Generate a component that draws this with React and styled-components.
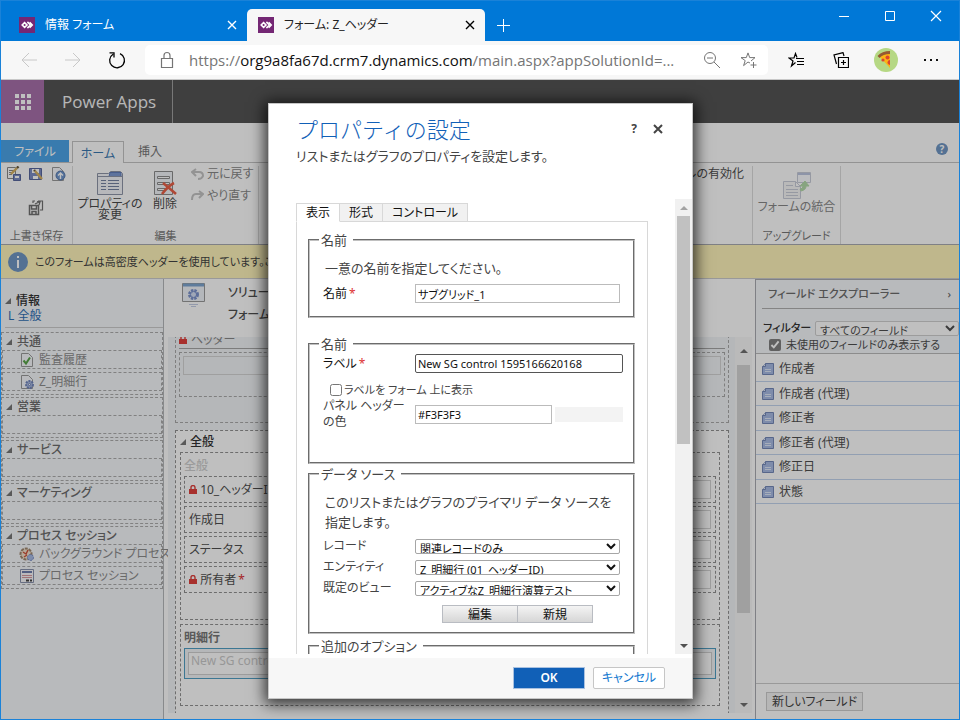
import React from 'react'
import styled, { createGlobalStyle, css } from 'styled-components'

const GlobalStyle = createGlobalStyle`
  * {
    box-sizing: border-box;
  }

  body {
    margin: 0;
    font-family: 'Noto Sans', 'Noto Sans CJK JP', sans-serif;
    font-feature-settings: 'palt';
    font-size: 12px;
    line-height: 16px;
  }

  button, input, select {
    font: inherit;
    font-feature-settings: inherit;
    color: inherit;
    margin: 0;
  }
`

const Window = styled.div`
  display: flex;
  flex-direction: column;
  height: 100vh;
  border: 1px solid #1a82d8;
  border-top: 0;
  overflow: hidden;
`

const IconButton = styled.button`
  align-items: center;
  background: none;
  border: 0;
  color: ${(p) => p.$color || '#000'};
  display: flex;
  flex: none;
  height: ${(p) => p.$height || 16}px;
  justify-content: center;
  padding: 0;
  width: ${(p) => p.$width || 16}px;
`

/* browser chrome */

const TitleBar = styled.div`
  align-items: flex-end;
  background: #0078d7;
  border-top: 1px solid #1a82d8;
  display: flex;
  height: 41px;
`

const BrowserTab = styled.div`
  align-items: center;
  background: ${(p) => (p.$active ? '#f7f7f7' : 'transparent')};
  border-radius: 5px 5px 0 0;
  color: ${(p) => (p.$active ? '#222' : '#fff')};
  display: flex;
  gap: 10px;
  height: 32px;
  padding: 0 7px 0 ${(p) => (p.$active ? 11 : 18)}px;
  width: ${(p) => (p.$active ? 238 : 246)}px;
`

const TabTitle = styled.span`
  flex: 1;
  white-space: nowrap;
`

const WindowControls = styled.div`
  align-self: flex-start;
  display: flex;
  margin-left: auto;
`

const Toolbar = styled.div`
  align-items: center;
  background: #f7f7f7;
  border-bottom: 1px solid #c8c8c8;
  display: flex;
  flex: none;
  height: 39px;
  padding: 0 6px;
`

const AddressBar = styled.div`
  align-items: center;
  background: #fff;
  border-radius: 5px;
  color: #757575;
  display: flex;
  flex: 1;
  height: 30px;
  margin: 0 5px 0 6px;
  min-width: 0;
  padding: 0 2px 0 12px;
`

const Url = styled.span`
  flex: 1;
  font-family: 'Open Sans', sans-serif;
  font-size: 15px;
  line-height: 20px;
  margin-left: 12px;
  overflow: hidden;
  white-space: nowrap;

  b {
    color: #111;
    font-weight: 400;
  }
`

/* page */

const Page = styled.div`
  background: #fff;
  color: #4f4f4f;
  display: flex;
  flex: 1;
  flex-direction: column;
  min-height: 0;
  position: relative;
`

const AppHeader = styled.header`
  background: #555;
  display: flex;
  flex: none;
  height: 43px;
`

const AppName = styled.div`
  border-right: 1px solid #a0a0a0;
  color: #f4f4f4;
  font-family: 'Open Sans', sans-serif;
  font-size: 17px;
  line-height: 43px;
  padding: 0 18px;
  white-space: nowrap;
  width: 129px;
`

const RibbonTabs = styled.nav`
  align-items: flex-end;
  border-bottom: 1px solid #c4c4c4;
  display: flex;
  flex: none;
  height: 40px;
  padding-right: 11px;
`

const RibbonTab = styled.a`
  color: ${(p) => (p.$kind === 'file' ? '#fff' : p.$kind === 'active' ? '#3a78b0' : '#777')};
  height: 22px;
  line-height: 24px;
  text-align: center;
  text-decoration: none;
  width: ${(p) => (p.$kind === 'file' ? 68 : 52)}px;
  ${(p) =>
    p.$kind === 'file' &&
    css`
      background: #4da5e8;
      margin-right: 3px;
    `}
  ${(p) =>
    p.$kind === 'active' &&
    css`
      background: #fff;
      border: 1px solid #c4c4c4;
      border-bottom: 0;
      margin-bottom: -1px;
    `}
`

const HelpLink = styled.button`
  align-self: center;
  background: #7097c4;
  border: 0;
  border-radius: 50%;
  color: #fff;
  font-size: 10px;
  font-weight: 700;
  height: 12px;
  line-height: 12px;
  margin: 12px 0 0 auto;
  padding: 0;
  width: 12px;
`

const Ribbon = styled.div`
  border-bottom: 1px solid #aaabb2;
  display: flex;
  flex: none;
  height: 82px;
`

const RibbonGroup = styled.section`
  border-right: 1px solid #dcdcdc;
  display: flex;
  flex: none;
  flex-direction: column;
  margin-top: 3px;
  width: ${(p) => p.$width}px;
`

const RibbonItems = styled.div`
  display: flex;
  flex: 1;
  flex-wrap: wrap;
  justify-content: ${(p) => p.$justify || 'flex-start'};
  padding: 0 ${(p) => p.$pad || 6}px;
`

const RibbonCaption = styled.div`
  color: #777;
  font-size: 11px;
  line-height: 16px;
  text-align: center;
`

const SmallIcons = styled.div`
  display: flex;
  flex-wrap: wrap;
  gap: 6px;
  justify-content: center;
  width: 60px;
`

const BigButton = styled.button`
  align-items: center;
  align-self: flex-start;
  background: none;
  border: 0;
  color: ${(p) => (p.$muted ? '#888' : '#4a4a4a')};
  display: flex;
  flex-direction: column;
  font-size: 12px;
  gap: 2px;
  line-height: 11px;
  padding: 5px 0 0;
  white-space: nowrap;
  width: ${(p) => p.$width}px;
`

const StackedButtons = styled.div`
  display: flex;
  flex-direction: column;
  gap: 6px;
  margin-left: 4px;

  button {
    align-items: center;
    background: none;
    border: 0;
    color: #888;
    display: flex;
    gap: 3px;
    padding: 0;
  }
`

const Notice = styled.div`
  align-items: center;
  background: #fff5bb;
  border-bottom: 1px solid #ccc;
  color: #444;
  display: flex;
  flex: none;
  font-size: 11px;
  gap: 7px;
  height: 34px;
  padding-left: 7px;
  white-space: nowrap;
`

const Main = styled.main`
  display: flex;
  flex: 1;
  min-height: 0;
`

/* left navigation */

const SideNav = styled.nav`
  background: #f6f8fb;
  border-right: 1px solid #b6b8bb;
  display: flex;
  flex: none;
  flex-direction: column;
  gap: 2px;
  width: 163px;
`

const NavTop = styled.div`
  border-bottom: 1px solid #ccc;
  height: 49px;
  margin: 0 0 2px 4px;
  padding-top: 14px;

  a {
    color: #2f6fb5;
    display: block;
    line-height: 14px;
    padding-left: 3px;
    text-decoration: none;
  }
`

const NavTitle = styled.div`
  align-items: center;
  color: ${(p) => (p.$strong ? '#333' : '#6c6c6c')};
  display: flex;
  font-weight: 500;
  gap: 5px;
  line-height: ${(p) => (p.$strong ? 16 : 17)}px;
`

const NavSection = styled.section`
  border: 1px dashed #acacac;
  padding-bottom: 3px;

  ${NavTitle} {
    padding-left: 4px;
  }
`

const NavItem = styled.div`
  align-items: center;
  border: 1px dashed #acacac;
  color: #8d8d8d;
  display: flex;
  gap: 4px;
  height: 19px;
  padding-left: 16px;
  white-space: nowrap;

  & + & {
    margin-top: 3px;
  }
`

/* form canvas */

const Canvas = styled.div`
  display: flex;
  flex: 1;
  flex-direction: column;
  min-width: 0;
  padding: 0 3px 6px 4px;
`

const CanvasHead = styled.div`
  display: flex;
  flex: none;
  gap: 22px;
  height: 58px;
  padding: 3px 0 0 10px;

  p {
    font-weight: 500;
    line-height: 22px;
    margin: 0;
    white-space: nowrap;
  }
`

const CanvasScroll = styled.div`
  background: #f2f4f7;
  display: flex;
  flex: 1;
  min-height: 0;
`

const FormArea = styled.div`
  flex: 1;
  min-width: 0;
  overflow: hidden;
  padding: 0 6px 0 7px;
`

const HeaderBox = styled.section`
  border: 1px dashed #aaa;
  height: 93px;
  margin: -7px 0 7px;
  padding: 0 3px;
`

const HeaderTitle = styled.div`
  align-items: center;
  border-bottom: 1px solid #a6a6a6;
  color: #888;
  display: flex;
  gap: 4px;
  height: 18px;
  margin-bottom: 3px;
`

const HeaderCell = styled.div`
  border: 1px dashed #aaa;
  height: 45px;
  padding: 3px;
`

const FakeInput = styled.div`
  border: 1px solid #d4d4d4;
  background: ${(p) => (p.$plain ? 'transparent' : '#fff')};
  height: ${(p) => p.$height || 19}px;
  ${(p) => p.$width && `width: ${p.$width}px;`}
`

const BodyBox = styled.section`
  background: #fff;
  border: 1px dashed #929292;
  height: 400px;
  padding: 0 8px 0 4px;
`

const BodyTitle = styled.h2`
  align-items: center;
  color: #333;
  display: flex;
  font-size: 12px;
  font-weight: 500;
  gap: 4px;
  height: 21px;
  margin: 0;
`

const FormSection = styled.div`
  border: 1px dashed #929292;
  height: ${(p) => p.$height}px;
  margin-bottom: 4px;
  padding: 0 3px;
`

const SectionTitle = styled.h3`
  color: ${(p) => (p.$muted ? '#cfcfcf' : '#777')};
  font-size: 12px;
  font-weight: ${(p) => (p.$muted ? 500 : 700)};
  height: 23px;
  line-height: 26px;
  margin: 0;
`

const Cell = styled.div`
  align-items: center;
  border: 1px dashed #929292;
  display: flex;
  height: 27px;
  margin-bottom: 3px;
  padding: 0 4px;
  white-space: nowrap;

  ${FakeInput} {
    margin-left: auto;
  }
`

const Required = styled.span`
  color: #d33;
  margin-left: 2px;
`

const GridCell = styled.div`
  border: 1px solid #519fc4;
  background: #f2f4f7;
  padding: 3px;
`

const GridName = styled.div`
  background: #fff;
  border: 1px solid #d0d0d0;
  color: #cacaca;
  height: 23px;
  line-height: 15px;
  padding-left: 2px;
`

const ScrollBar = styled.div`
  align-items: center;
  background: ${(p) => p.$track};
  display: flex;
  flex: none;
  flex-direction: column;
  justify-content: space-between;
  width: 17px;
`

const Thumb = styled.div`
  background: ${(p) => p.$color || '#c1c1c1'};
  height: ${(p) => p.$height}%;
  margin-bottom: auto;
  width: 13px;
`

const ScrollArrow = styled.span`
  align-items: center;
  display: flex;
  flex: none;
  height: ${(p) => p.$height || 17}px;
`

/* field explorer */

const Explorer = styled.aside`
  background: #fff;
  border-left: 1px solid #aaabb2;
  border-top: 1px solid #aaabb2;
  display: flex;
  flex: none;
  flex-direction: column;
  width: 204px;
`

const ExplorerHead = styled.div`
  background: #f6f8fb;
  border-bottom: 1px solid #bbb;
  padding-left: 6px;

  h2 {
    border-bottom: 1px solid #b0b0b0;
    color: #6c6c6c;
    display: flex;
    font-size: 11px;
    font-weight: 500;
    justify-content: space-between;
    line-height: 28px;
    margin: 0 0 11px;
    padding: 0 8px 0 6px;
  }
`

const FilterRow = styled.div`
  align-items: center;
  display: flex;
  font-size: 11px;
  gap: 8px;
  padding-left: 1px;

  label {
    color: #333;
    font-weight: 500;
    width: 44px;
    white-space: nowrap;
  }
`

const CheckRow = styled.label`
  align-items: center;
  display: flex;
  font-size: 11px;
  gap: ${(p) => p.$gap}px;
  height: 17px;
  padding-left: 7px;
  white-space: nowrap;

  input {
    accent-color: #808080;
    height: 12px;
    width: 12px;
  }
`

const FieldList = styled.ul`
  border-bottom: 1px solid #ccc;
  flex: 1;
  list-style: none;
  margin: 0;
  padding: 3px 0 0;

  li {
    align-items: center;
    border-bottom: 1px solid #c3d5ee;
    display: flex;
    gap: 5px;
    height: 24px;
    padding-left: 6px;
  }

  li:nth-child(odd) {
    height: 25px;
  }
`

const NewFieldButton = styled.button`
  align-self: flex-start;
  background: #f3f3f3;
  border: 1px solid #ccc;
  color: #444;
  height: 19px;
  line-height: 16px;
  margin: 8px 10px;
  padding: 0 5px;
`

/* dialog */

const Overlay = styled.div`
  background: rgba(0, 0, 0, 0.25);
  display: flex;
  inset: 0;
  justify-content: center;
  padding: 23px 0 20px 1px;
  position: absolute;
`

const Dialog = styled.div`
  background: #fff;
  border: 1px solid #c6c6c6;
  box-shadow: 0 2px 14px 3px rgba(0, 0, 0, 0.75);
  color: #444;
  display: flex;
  flex-direction: column;
  width: 425px;
`

const DialogHead = styled.header`
  display: flex;
  flex: none;
  height: 95px;
  justify-content: space-between;
  padding: 10px 26px 0 27px;

  h1 {
    color: #1160b7;
    font-feature-settings: normal;
    font-size: 22px;
    font-weight: 300;
    line-height: 30px;
    margin: 0;
  }

  p {
    font-size: 13px;
    line-height: 20px;
    margin: 2px 0 0;
    white-space: nowrap;
  }
`

const DialogTools = styled.div`
  display: flex;
  gap: 8px;
  padding-top: 7px;
`

const DialogBody = styled.div`
  display: flex;
  flex: 1;
  min-height: 0;
  padding-left: 27px;
`

const DialogScroll = styled.div`
  flex: 1;
  overflow: hidden;
  padding: 4px 27px 0 0;
`

const TabList = styled.div`
  display: flex;
  margin-bottom: -1px;
`

const DialogTab = styled.button`
  background: ${(p) => (p.$active ? '#fff' : '#f1f1f1')};
  border: 1px solid #d8d8d8;
  border-bottom-color: ${(p) => (p.$active ? '#fff' : '#d8d8d8')};
  color: #111;
  height: 19px;
  line-height: 16px;
  padding: 0 9px;

  & + & {
    border-left: 0;
  }
`

const TabPanel = styled.div`
  border: 1px solid #d8d8d8;
  height: 640px;
  padding: 8px 12px 0 11px;
`

const Fieldset = styled.fieldset`
  border: 2px groove #c0c0c0;
  height: ${(p) => p.$height}px;
  margin: 0 0 ${(p) => p.$after}px;
  min-width: 0;
  padding: 0 10px 0 13px;

  legend {
    font-size: 13px;
    line-height: 20px;
    margin-left: -4px;
    padding: 0 6px 0 2px;
  }
`

const Hint = styled.p`
  font-size: 13px;
  line-height: 20px;
  margin: 8px 0 6px 2px;
`

const Row = styled.div`
  align-items: center;
  display: flex;
  margin-bottom: ${(p) => p.$after || 0}px;

  label {
    color: ${(p) => (p.$dark ? '#111' : '#444')};
    flex: none;
    width: 92px;
  }
`

const TextInput = styled.input`
  background: #fff;
  border: 1px solid ${(p) => (p.$focused ? '#555' : '#bbb')};
  border-radius: ${(p) => (p.$focused ? 2 : 0)}px;
  color: #111;
  font-size: 11px;
  height: 19px;
  padding: 0 2px;
  width: ${(p) => p.$width}px;
`

const Select = styled.select`
  background: #fff;
  border: 1px solid ${(p) => (p.$light ? '#d0d0d0' : '#a6a6a6')};
  border-radius: 2px;
  color: ${(p) => (p.$light ? '#4f4f4f' : '#111')};
  flex: ${(p) => (p.$width ? 'none' : 1)};
  font-size: 11px;
  height: 15px;
  line-height: 13px;
  min-width: 0;
  padding: 0;
  ${(p) => p.$width && `width: ${p.$width}px;`}
`

const Swatch = styled.span`
  background: #f3f3f3;
  height: 15px;
  margin-left: 3px;
  width: 69px;
`

const ButtonPair = styled.div`
  display: flex;
  margin: 9px 0 0 119px;

  button {
    background: linear-gradient(#f4f4f4, #d6d6d6);
    border: 1px solid #b9bcc2;
    color: #111;
    height: 18px;
    line-height: 15px;
    padding: 0;
    width: 76px;
  }

  button + button {
    margin-left: -1px;
  }
`

const DialogFooter = styled.footer`
  background: #f7f7f7;
  display: flex;
  flex: none;
  gap: 8px;
  height: 40px;
  justify-content: flex-end;
  margin-top: 4px;
  padding: 9px 27px 0;
`

const FooterButton = styled.button`
  background: ${(p) => (p.$primary ? '#1160b7' : '#fff')};
  border: 1px solid ${(p) => (p.$primary ? '#a9c1e0' : '#c6c6c6')};
  border-radius: ${(p) => (p.$primary ? 0 : 2)}px;
  color: ${(p) => (p.$primary ? '#fff' : '#1177cf')};
  font-weight: ${(p) => (p.$primary ? 600 : 400)};
  height: 22px;
  line-height: 18px;
  padding: 0;
  width: 72px;
`

/* icons */

const Svg = ({ size = 16, w, h, children, ...rest }) => (
  <svg
    width={w || size}
    height={h || size}
    viewBox={`0 0 ${w || size} ${h || size}`}
    fill="none"
    stroke="currentColor"
    aria-hidden="true"
    style={{ flex: 'none' }}
    {...rest}
  >
    {children}
  </svg>
)

const Favicon = () => (
  <Svg stroke="#fff" strokeWidth="1.6">
    <path d="M0 0h16v16H0z" fill="#742774" stroke="none" />
    <path d="M5.6 5.6 3.2 8l2.4 2.4L8 8zM8.2 5.8 9 5.4 11.4 8 9 10.6l-.8-.4" />
    <path d="M10.6 5.4 13.2 8l-2.6 2.6" />
  </Svg>
)

const Cross = ({ size = 10, width = 1.4 }) => (
  <Svg size={size} strokeWidth={width}>
    <path d={`M1 1 ${size - 1} ${size - 1}M${size - 1} 1 1 ${size - 1}`} />
  </Svg>
)

const Lock = () => (
  <Svg w={8} h={9} stroke="#e0403c">
    <path d="M0 4h8v5H0z" fill="#e0403c" stroke="none" />
    <path d="M2 4V2.5a2 2 0 0 1 4 0V4" strokeWidth="1.4" />
  </Svg>
)

const Caret = () => (
  <Svg size={6} stroke="none">
    <path d="M6 0v6H0z" fill="#777" />
  </Svg>
)

const Arrow = ({ down, color }) => (
  <Svg w={8} h={4} stroke="none">
    <path d={down ? 'M0 0h8L4 4z' : 'M0 4h8L4 0z'} fill={color} />
  </Svg>
)

const FieldIcon = () => (
  <Svg size={12} stroke="#7489b8">
    <path d="M3.500.5h8v11H.5v-8z" fill="#a8bbe4" />
    <path d="M.5 3.500h3v-3" fill="#e4ebf8" />
    <path d="M3 6.500h6M3 8.500h6" stroke="#dfe8f8" />
  </Svg>
)

const DocIcon = ({ kind }) => (
  <Svg stroke="#9a9a9a">
    <path d="M2.500 1.500h7l4 4v9h-11z" fill="#f7f9fc" />
    {kind === 'check' && <path d="m4.500 8.500 2.500 3 4-6" stroke="#5aa54a" strokeWidth="2" />}
    {kind === 'gear' && (
      <g stroke="#7286bd">
        <circle cx="10.500" cy="10.500" r="3.500" fill="#a7b7de" strokeWidth="2" strokeDasharray="2 1" />
        <circle cx="10.500" cy="10.500" r="1" fill="#fff" />
      </g>
    )}
    {kind === 'up' && (
      <g>
        <circle cx="10.500" cy="9.500" r="4.500" fill="#6f97cf" stroke="#5678ad" />
        <path d="M10.500 13V7M8 9.500 10.500 7 13 9.500" stroke="#fff" strokeWidth="1.400" />
      </g>
    )}
  </Svg>
)

const ProcessIcon = () => (
  <Svg stroke="#a08870">
    <circle cx="7" cy="8" r="5.500" fill="#f3e2cd" strokeWidth="2" strokeDasharray="3 1" />
    <path d="m4 6 3 2 2-4M5 11l3-2" stroke="#d0543c" strokeWidth="1.500" />
    <circle cx="11.500" cy="11.500" r="3" fill="#a9bce6" stroke="#6f86c2" strokeDasharray="2 1" />
  </Svg>
)

const WindowIcon = () => (
  <Svg stroke="#8a93ae">
    <path d="M1.500 1.500h13v13h-13z" fill="#f8f8fb" />
    <path d="M3 4h10" stroke="#6f7fae" strokeWidth="2" />
    <path d="M3 7.500h10M3 9.500h10" stroke="#d79a9f" />
    <path d="M7 12.500h3M11 12.500h2" stroke="#444" strokeWidth="2" />
  </Svg>
)

const Floppy = ({ pencil, doc }) => (
  <Svg stroke="#59679e">
    {doc && <path d="M1.500 1.500h8v11h-8zM3 4.500h5M3 6.500h5M3 8.500h3" fill="#fff" stroke="#8a8a8a" />}
    <path d={doc ? 'M7.500 8.500h7v6h-7z' : 'M1.500 2.500h12v11h-12z'} fill="#7d8dc4" />
    <path d={doc ? 'M9 10h4v2H9z' : 'M4 3h7v4H4zM5 10h5v3H5z'} fill="#fff" stroke="none" />
    {pencil && <path d={doc ? 'm11 2-6 6' : 'm7 5 7 8'} stroke="#d8b263" strokeWidth="2.400" />}
    {pencil && <path d={doc ? 'M12.500.5 11 2' : 'm6 4 1 1'} stroke="#6a5a3c" strokeWidth="2.400" />}
  </Svg>
)

const SaveAll = () => (
  <Svg stroke="#707070" strokeWidth="1.500">
    <path d="M1.500 5.500h9v9h-9z" fill="#fff" />
    <path d="M3.500 6v3h5V6M4 14v-2.500h4V14" />
    <path d="M5 3V1h2M10 1h4.500v9H12M7 4l4-2M9 1.500l3 .5-1 3" strokeWidth="1.200" />
  </Svg>
)

const PropertiesIcon = () => (
  <Svg w={26} h={25} stroke="#8f96a8">
    <path d="M.5 2.500h11l2-2h10l2 2v21H.5z" fill="#f4f6fa" />
    <path d="M13 1.500h11v4H12z" fill="#7e9ad2" stroke="#5f7dbb" />
    <path d="M1 5.500h24" />
    <path d="M4 9.500h5M11 9.500h11M4 12.500h5M11 12.500h11M4 15.500h5M11 15.500h11M4 18.500h5M11 18.500h11" stroke="#7683a2" />
  </Svg>
)

const DeleteIcon = () => (
  <Svg w={26} h={25} stroke="#8c8c8c">
    <path d="M2.500.5h18v23h-18z" fill="#f2f4f9" />
    <path d="M5.500 5.500h12v2h-12zM5.500 11.500h12v2h-12zM5.500 17.500h8v2h-8z" fill="#fff" />
    <path d="M11 12q5 4 13 11M22 12q-6 3-12 11" stroke="#ea6148" strokeWidth="2.600" />
  </Svg>
)

const MergeIcon = () => (
  <Svg w={28} h={28} stroke="#c8ccd8">
    <path d="M14.500 1.500h13v10h-13z" fill="#fafbff" />
    <path d="M15 3h12" stroke="#bcc6e0" strokeWidth="2" />
    <path d="M.5 10.500h12l5 5v12H.5zM12.500 10.500v5h5" fill="#f7f7f7" />
    <path d="M3 14.500h7M3 18.500h12M3 21.500h12M3 24.500h12" />
    <path d="M18 20q5-1 5-5h3l-4-5-5 5h3q0 3-3 3z" fill="#b5dbab" stroke="#b5dbab" />
  </Svg>
)

const Undo = ({ flip }) => (
  <Svg w={13} h={12} stroke="#c4c4c4" strokeWidth="2">
    <path d={flip ? 'M12 4H5Q1 4 1 10M8 1l4 3-4 4' : 'M1 4h7q4 0 4 4-1 3-5 3M5 1 1 4l4 4'} />
  </Svg>
)

const FormGearIcon = () => (
  <Svg w={28} h={26} stroke="#9a9a9a">
    <path d="M4.500 1.500h22v18h-22z" fill="#f1f4fa" />
    <path d="M5 3h21" stroke="#7ea6d0" strokeWidth="3" />
    <circle cx="15.500" cy="12.500" r="4" fill="#d4dff5" stroke="#7c93cc" strokeWidth="3" strokeDasharray="2.200 1" />
    <circle cx="15.500" cy="12.500" r="3.200" stroke="#7c93cc" />
    <path d="M11 22.500h9M13 24.500h5" stroke="#c3cde4" />
  </Svg>
)

const Pizza = () => (
  <Svg size={24} stroke="none">
    <circle cx="12" cy="12" r="12" fill="#b6d884" />
    <path d="M5 8 16 4v16z" fill="#fbb515" />
    <path d="M3.500 8Q8 3 16 3v3Q9 6 5.500 10z" fill="#965a32" />
    <circle cx="13.500" cy="9.500" r="2" fill="#dc4530" />
    <circle cx="9" cy="12" r="1.600" fill="#dc4530" />
    <path d="M16 12v5q-3-1-2.500-3T16 12z" fill="#dc4530" />
  </Svg>
)

const starPath = 'M8 1.200 9.700 6H15l-4.200 3.100 1.600 5L8 11l-4.400 3.100 1.600-5L1 6h5.300z'

const navSections = [
  { title: '共通', items: [['監査履歴', <DocIcon kind="check" />], ['Z_明細行', <DocIcon kind="gear" />]] },
  { title: '営業', items: [[]] },
  { title: 'サービス', items: [[]] },
  { title: 'マーケティング', items: [[]] },
  { title: 'プロセス セッション', items: [['バックグラウンド プロセス', <ProcessIcon />], ['プロセス セッション', <WindowIcon />]] },
]

const cells = [
  { name: '10_ヘッダーID', locked: true },
  { name: '作成日' },
  { name: 'ステータス' },
  { name: '所有者', locked: true, required: true },
]

const fields = ['作成者', '作成者 (代理)', '修正者', '修正者 (代理)', '修正日', '状態']

const sources = [
  ['record', 'レコード', '関連レコードのみ'],
  ['entity', 'エンティティ', 'Z_明細行 (01_ヘッダーID)'],
  ['view', '既定のビュー', 'アクティブなZ_明細行演算テスト'],
]

const BrowserChrome = () => (
  <>
    <TitleBar>
      <BrowserTab>
        <Favicon />
        <TabTitle>情報 フォーム</TabTitle>
        <IconButton $color="#fff" aria-label="close tab"><Cross /></IconButton>
      </BrowserTab>
      <BrowserTab $active>
        <Favicon />
        <TabTitle>フォーム: Z_ヘッダー</TabTitle>
        <IconButton aria-label="close tab"><Cross /></IconButton>
      </BrowserTab>
      <IconButton $color="#fff" $width={36} $height={32} aria-label="new tab">
        <Svg size={13}><path d="M6.500 0v13M0 6.500h13" /></Svg>
      </IconButton>
      <WindowControls>
        <IconButton $color="#fff" $width={46} $height={29} aria-label="minimize">
          <Svg size={10}><path d="M0 5.500h10" /></Svg>
        </IconButton>
        <IconButton $color="#fff" $width={46} $height={29} aria-label="maximize">
          <Svg size={10}><path d="M.5.5h9v9h-9z" /></Svg>
        </IconButton>
        <IconButton $color="#fff" $width={46} $height={29} aria-label="close">
          <Cross size={12} width={1.2} />
        </IconButton>
      </WindowControls>
    </TitleBar>
    <Toolbar>
      <IconButton $width={44} $height={30} $color="#c8c8c8" aria-label="back">
        <Svg><path d="M16 8H1M8 1 1 8l7 7" /></Svg>
      </IconButton>
      <IconButton $width={44} $height={30} $color="#c8c8c8" aria-label="forward">
        <Svg><path d="M0 8h15M8 1l7 7-7 7" /></Svg>
      </IconButton>
      <IconButton $width={44} $height={30} aria-label="reload">
        <Svg size={18} strokeWidth="1.300">
          <path d="M5 3.200A7.400 7.400 0 1 0 12 2.600M1.500 1.800H6V6.500" />
        </Svg>
      </IconButton>
      <AddressBar>
        <Svg w={20} h={18}>
          <path d="M4.500 7.500h11v9h-11zM7 7V4.500a3 3 0 0 1 6 0V7" strokeWidth="1.200" />
        </Svg>
        <Url>
          https://<b>org9a8fa67d.crm7.dynamics.com</b>/main.aspx?appSolutionId=...
        </Url>
        <IconButton $width={36} $height={30} $color="#757575" aria-label="zoom">
          <Svg size={18}><circle cx="7" cy="7" r="5.500" /><path d="m11 11 6 6M4 7h6" /></Svg>
        </IconButton>
        <IconButton $width={36} $height={30} $color="#757575" aria-label="add favorite">
          <Svg size={17}>
            <path d="M10 11 8 10l-4.400 3.600 1.600-5L1 5.600h5.300L8 .9l1.700 4.700H15L11 9M13.500 10v6M10.500 13h6" />
          </Svg>
        </IconButton>
      </AddressBar>
      <IconButton $width={45} $height={30} aria-label="favorites">
        <Svg strokeWidth="1.200">
          <path d="m7.500 10.500-4 3.500L5 9 1 6h5l1.500-4.500L9 5.500M8 6.500h8M9 9.500h7M9 12.500h7" />
        </Svg>
      </IconButton>
      <IconButton $width={45} $height={30} aria-label="collections">
        <Svg strokeWidth="1.200">
          <path d="M5.500 5.500h10v10h-10zM10.500 8v5M8 10.500h5M3.500 12 1 3l9-2.400L11 4" />
        </Svg>
      </IconButton>
      <IconButton $width={45} $height={30} aria-label="profile"><Pizza /></IconButton>
      <IconButton $width={45} $height={30} aria-label="menu">
        <Svg stroke="none" fill="#111"><path d="M1 7h2v2H1zM7 7h2v2H7zM13 7h2v2h-2z" /></Svg>
      </IconButton>
    </Toolbar>
  </>
)

const RibbonBar = () => (
  <>
    <RibbonTabs>
      <RibbonTab href="#file" $kind="file">ファイル</RibbonTab>
      <RibbonTab href="#home" $kind="active">ホーム</RibbonTab>
      <RibbonTab href="#insert">挿入</RibbonTab>
      <HelpLink>?</HelpLink>
    </RibbonTabs>
    <Ribbon>
      <RibbonGroup $width={72}>
        <RibbonItems $pad={5}>
          <SmallIcons>
            <Floppy doc pencil />
            <Floppy pencil />
            <DocIcon kind="up" />
            <SaveAll />
          </SmallIcons>
        </RibbonItems>
        <RibbonCaption>上書き保存</RibbonCaption>
      </RibbonGroup>
      <RibbonGroup $width={186}>
        <RibbonItems $pad={4}>
          <BigButton $width={66}>
            <PropertiesIcon />
            <span>プロパティの<br />変更</span>
          </BigButton>
          <BigButton $width={44}>
            <DeleteIcon />
            <span>削除</span>
          </BigButton>
          <StackedButtons>
            <button><Undo />元に戻す</button>
            <button><Undo flip />やり直す</button>
          </StackedButtons>
        </RibbonItems>
        <RibbonCaption>編集</RibbonCaption>
      </RibbonGroup>
      <RibbonGroup $width={494}>
        <RibbonItems $pad={8} $justify="flex-end">ルの有効化</RibbonItems>
      </RibbonGroup>
      <RibbonGroup $width={88}>
        <RibbonItems $pad={4}>
          <BigButton $width={80} $muted>
            <MergeIcon />
            <span>フォームの統合</span>
          </BigButton>
        </RibbonItems>
        <RibbonCaption>アップグレード</RibbonCaption>
      </RibbonGroup>
    </Ribbon>
  </>
)

const LeftNav = () => (
  <SideNav>
    <NavTop>
      <NavTitle $strong><Caret />情報</NavTitle>
      <a href="#general">L 全般</a>
    </NavTop>
    {navSections.map((s) => (
      <NavSection key={s.title}>
        <NavTitle><Caret />{s.title}</NavTitle>
        {s.items.map(([name, icon], i) => (
          <NavItem key={i}>{icon}{name}</NavItem>
        ))}
      </NavSection>
    ))}
  </SideNav>
)

const FormCanvas = () => (
  <Canvas>
    <CanvasHead>
      <FormGearIcon />
      <div>
        <p>ソリューション</p>
        <p>フォーム</p>
      </div>
    </CanvasHead>
    <CanvasScroll>
      <FormArea>
        <HeaderBox>
          <HeaderTitle><Lock />ヘッダー</HeaderTitle>
          <HeaderCell><FakeInput $plain /></HeaderCell>
        </HeaderBox>
        <BodyBox>
          <BodyTitle><Caret />全般</BodyTitle>
          <FormSection $height={168}>
            <SectionTitle $muted>全般</SectionTitle>
            {cells.map((c) => (
              <Cell key={c.name}>
                {c.locked && <Lock />}
                <span>{c.locked && '\u00a0'}{c.name}</span>
                {c.required && <Required>*</Required>}
                <FakeInput $width={300} />
              </Cell>
            ))}
          </FormSection>
          <FormSection $height={82}>
            <SectionTitle>明細行</SectionTitle>
            <GridCell><GridName>New SG control 1595166620168</GridName></GridCell>
          </FormSection>
        </BodyBox>
      </FormArea>
      <ScrollBar $track="#f8f8f8">
        <ScrollArrow $height={28}><Arrow color="#707070" /></ScrollArrow>
        <Thumb $height={66} $color="#d6d6d6" />
        <ScrollArrow><Arrow down color="#707070" /></ScrollArrow>
      </ScrollBar>
    </CanvasScroll>
  </Canvas>
)

const FieldExplorer = () => (
  <Explorer>
    <ExplorerHead>
      <h2>フィールド エクスプローラー<span>›</span></h2>
      <FilterRow>
        <label htmlFor="filter">フィルター</label>
        <Select id="filter" $light><option>すべてのフィールド</option></Select>
      </FilterRow>
      <CheckRow $gap={5}>
        <input type="checkbox" defaultChecked />
        未使用のフィールドのみ表示する
      </CheckRow>
    </ExplorerHead>
    <FieldList>
      {fields.map((f) => (
        <li key={f}><FieldIcon />{f}</li>
      ))}
    </FieldList>
    <NewFieldButton>新しいフィールド</NewFieldButton>
  </Explorer>
)

const PropertiesDialog = () => (
  <Dialog role="dialog">
    <DialogHead>
      <div>
        <h1>プロパティの設定</h1>
        <p>リストまたはグラフのプロパティを設定します。</p>
      </div>
      <DialogTools>
        <IconButton $color="#444" aria-label="help"><b>?</b></IconButton>
        <IconButton $color="#444" aria-label="close dialog"><Cross width={2} /></IconButton>
      </DialogTools>
    </DialogHead>
    <DialogBody>
      <DialogScroll>
        <TabList>
          <DialogTab $active>表示</DialogTab>
          <DialogTab>形式</DialogTab>
          <DialogTab>コントロール</DialogTab>
        </TabList>
        <TabPanel>
          <Fieldset $height={88} $after={16}>
            <legend>名前</legend>
            <Hint>一意の名前を指定してください。</Hint>
            <Row $dark>
              <label htmlFor="name">名前<Required>*</Required></label>
              <TextInput id="name" $width={205} defaultValue="サブグリッド_1" />
            </Row>
          </Fieldset>
          <Fieldset $height={130} $after={0}>
            <legend>名前</legend>
            <Row $dark $after={8} style={undefined}>
              <label htmlFor="label">ラベル<Required>*</Required></label>
              <TextInput id="label" $width={212} $focused defaultValue="New SG control 1595166620168" />
            </Row>
            <CheckRow $gap={2}>
              <input type="checkbox" />
              ラベルを フォーム 上に表示
            </CheckRow>
            <Row>
              <label htmlFor="color">パネル ヘッダー<br />の色</label>
              <TextInput id="color" $width={137} defaultValue="#F3F3F3" />
              <Swatch />
            </Row>
          </Fieldset>
          <Fieldset $height={170} $after={2}>
            <legend>データ ソース</legend>
            <Hint>このリストまたはグラフのプライマリ データ ソースを指定します。</Hint>
            {sources.map(([id, label, value]) => (
              <Row key={id} $after={5}>
                <label htmlFor={id}>{label}</label>
                <Select id={id} $width={205}><option>{value}</option></Select>
              </Row>
            ))}
            <ButtonPair>
              <button>編集</button>
              <button>新規</button>
            </ButtonPair>
          </Fieldset>
          <Fieldset $height={120} $after={0}>
            <legend>追加のオプション</legend>
          </Fieldset>
        </TabPanel>
      </DialogScroll>
      <ScrollBar $track="#f1f1f1">
        <ScrollArrow><Arrow color="#a3a3a3" /></ScrollArrow>
        <Thumb $height={50} />
        <ScrollArrow><Arrow down color="#505050" /></ScrollArrow>
      </ScrollBar>
    </DialogBody>
    <DialogFooter>
      <FooterButton $primary>OK</FooterButton>
      <FooterButton>キャンセル</FooterButton>
    </DialogFooter>
  </Dialog>
)

const App = () => (
  <>
    <GlobalStyle />
    <Window>
      <BrowserChrome />
      <Page>
        <AppHeader>
          <IconButton $width={43} $height={43} aria-label="apps" style={{ background: '#a971ab' }}>
            <Svg stroke="none" fill="#fff">
              <path d="M0 0h4v4H0zM6 0h4v4H6zM12 0h4v4h-4zM0 6h4v4H0zM6 6h4v4H6zM12 6h4v4h-4zM0 12h4v4H0zM6 12h4v4H6zM12 12h4v4h-4z" />
            </Svg>
          </IconButton>
          <AppName>Power Apps</AppName>
        </AppHeader>
        <RibbonBar />
        <Notice>
          <Svg size={20} stroke="none">
            <circle cx="10" cy="10" r="10" fill="#7097c4" />
            <path d="M9 8h2v8H9zM9 4h2v2H9z" fill="#fff" />
          </Svg>
          このフォームは高密度ヘッダーを使用しています。このフォーム
        </Notice>
        <Main>
          <LeftNav />
          <FormCanvas />
          <FieldExplorer />
        </Main>
        <Overlay>
          <PropertiesDialog />
        </Overlay>
      </Page>
    </Window>
  </>
)

export default App
